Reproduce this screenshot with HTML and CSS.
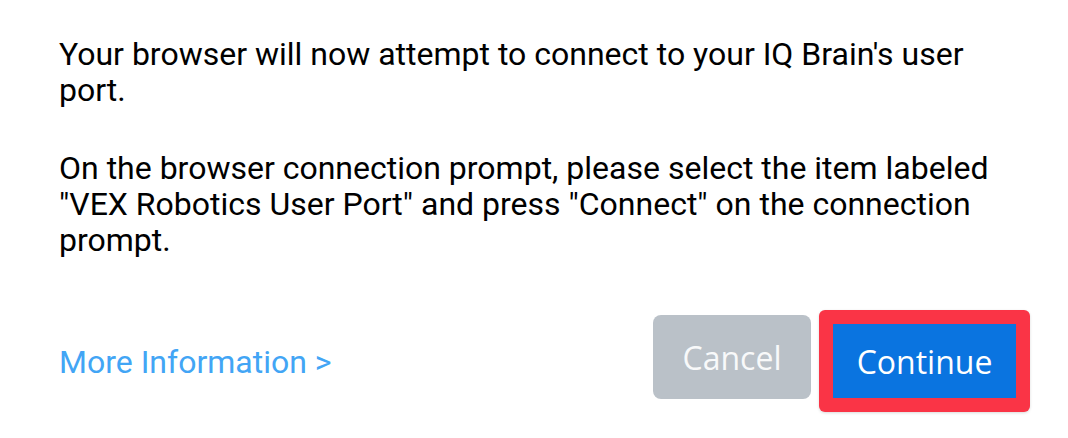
FILE: index.html
```html
<!DOCTYPE html>
<html>
<head>
<meta charset="utf-8">
<link rel="stylesheet" href="styles.css">
</head>
<body>
<div class="dialog">
  <div class="body">
    <p>Your browser will now attempt to connect to your IQ Brain's user port.</p>
    <p>On the browser connection prompt, please select the item labeled "VEX Robotics User Port" and press "Connect" on the connection prompt.</p>
  </div>
  <div class="footer">
    <a class="more" href="#">More Information &gt;</a>
    <div class="actions">
      <button class="btn btn-cancel">Cancel</button>
      <div class="highlight"><button class="btn btn-continue">Continue</button></div>
    </div>
  </div>
</div>
</body>
</html>
```
FILE: styles.css
```css
html, body {
  margin: 0;
  padding: 0;
  background: #ffffff;
}
.dialog {
  width: 1068px;
  height: 438px;
  box-sizing: border-box;
  padding: 36px 38px 0 59px;
  font-family: Roboto, "Liberation Sans", sans-serif;
  color: #000;
}
.body p {
  margin: 0 0 42px 0;
  font-size: 32px;
  line-height: 36px;
  max-width: 950px;
}
.body p:last-child {
  margin-bottom: 0;
}
.footer {
  display: flex;
  align-items: flex-start;
  justify-content: space-between;
  margin-top: 52px;
}
.more {
  color: #42a5f5;
  text-decoration: none;
  font-size: 32px;
  line-height: 36px;
  margin-top: 34px;
}
.actions {
  display: flex;
  align-items: flex-start;
  gap: 8px;
}
.btn {
  font-family: "Open Sans", "Liberation Sans", sans-serif;
  font-size: 32px;
  color: #fff;
  border: none;
  margin: 0;
  padding: 0;
}
.btn-cancel {
  width: 158px;
  height: 84px;
  background: #bac1c8;
  color: #f8f9fa;
  border-radius: 8px;
  margin-top: 5px;
}
.highlight {
  background: #fa3446;
  border-radius: 6px;
  padding: 14px;
  box-shadow: 0 1px 3px rgba(0,0,0,0.15);
}
.btn-continue {
  display: block;
  width: 183px;
  height: 74px;
  background: #0a74e0;
}
```
